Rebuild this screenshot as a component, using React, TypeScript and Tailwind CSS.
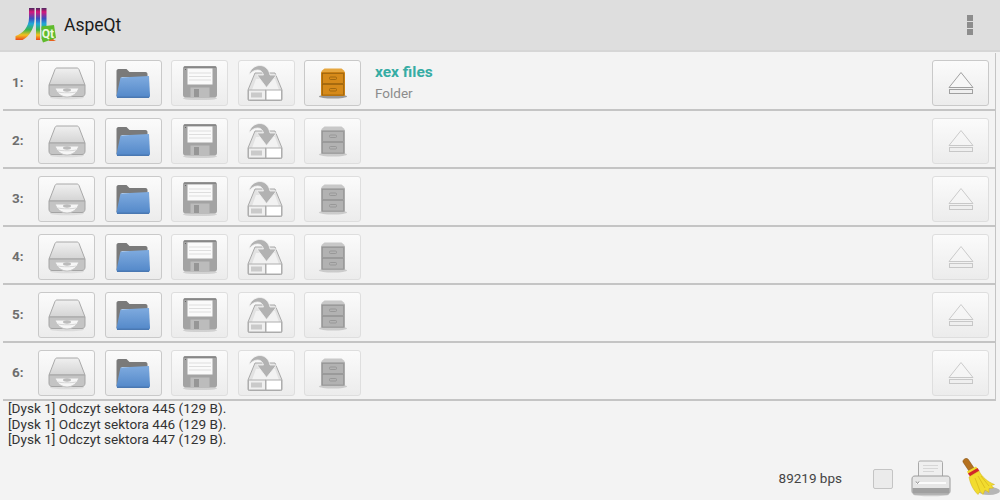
import React from "react";

const Logo = () => (
  <svg width="44" height="37" viewBox="0 0 44 37">
    <defs>
      <linearGradient id="rb" gradientUnits="userSpaceOnUse" x1="0" y1="1" x2="0" y2="34">
        <stop offset="0" stopColor="#4a2a60" />
        <stop offset="0.12" stopColor="#d8167a" />
        <stop offset="0.32" stopColor="#3a4fc0" />
        <stop offset="0.48" stopColor="#20a8d8" />
        <stop offset="0.66" stopColor="#3cb54a" />
        <stop offset="0.82" stopColor="#f4c020" />
        <stop offset="1" stopColor="#e8301c" />
      </linearGradient>
    </defs>
    <path d="M15 1h5.500v11c0 9-5.500 18-12 21H1.500v-4c7-2 13.500-9 13.500-18z" fill="url(#rb)" />
    <rect x="22" y="1" width="4" height="32" fill="url(#rb)" />
    <rect x="27.500" y="1" width="5" height="22" fill="url(#rb)" />
    <path d="M36 28l4 5 2 1h-7z" fill="#e8601c" />
    <path d="M27.500 19.500l12.500-1.500 2 13-13 4.500-1.500-4z" fill="#5fbb2c" />
    <text x="34" y="31" fontSize="12" fontWeight="700" fill="#eef9e0" textAnchor="middle" style={{ fontFamily: "Roboto, sans-serif" }}>Qt</text>
  </svg>
);

const Drive = () => (
  <svg width="40" height="36" viewBox="0 0 40 36" className="blur-[0.5px]">
    <defs>
      <linearGradient id="dt" x1="0" y1="0" x2="0" y2="1">
        <stop offset="0" stopColor="#f0f0f0" />
        <stop offset="1" stopColor="#d4d4d4" />
      </linearGradient>
    </defs>
    <ellipse cx="20" cy="32.500" rx="17" ry="1.800" fill="#000" opacity="0.08" />
    <path d="M8 4.500c.5-1 1-1.500 2-1.500h20c1 0 1.500.5 2 1.500l6 15.500H2z" fill="url(#dt)" stroke="#a8a8a8" />
    <path d="M2 20h36v8c0 2-1 3.500-3 3.500H5c-2 0-3-1.500-3-3.500z" fill="#c4c4c4" stroke="#a4a4a4" />
    <path d="M8 23h24c-2 5.500-6.500 9-12 9s-10-3.500-12-9z" fill="#f6f6f6" stroke="#c4c4c4" />
    <ellipse cx="20" cy="25" rx="4" ry="1.700" fill="#bbbbbb" />
    <path d="M11 27c4 1 14 1 18 0" stroke="#d6d6d6" fill="none" />
  </svg>
);

const Folder = () => (
  <svg width="36" height="32" viewBox="0 0 36 32" className="blur-[0.4px]">
    <defs>
      <linearGradient id="fb" x1="0" y1="0" x2="0" y2="1">
        <stop offset="0" stopColor="#7fabdf" />
        <stop offset="1" stopColor="#5388c9" />
      </linearGradient>
    </defs>
    <path d="M1.500 4c0-1 .6-2 2-2h8l3 3h16c1 0 2 .8 2 2v3h-26v19h-5z" fill="#7a7a7a" />
    <path d="M5.500 10.500l28.500-1.500 1 19.500c0 1.500-.5 2-1.500 2H3c-1 0-1.500-.5-1.500-1.500z" fill="url(#fb)" />
    <path d="M2 29.500h32v1.500H2z" fill="#4a78b2" />
  </svg>
);

const Floppy = () => (
  <svg width="36" height="36" viewBox="0 0 36 36" className="blur-[0.4px]">
    <ellipse cx="18" cy="33.500" rx="17" ry="1.600" fill="#000" opacity="0.12" />
    <path d="M1 3c0-1 1-2 2-2h30c1 0 2 1 2 2v27c0 1.500-1 2.500-2 2.500H3c-1 0-2-1-2-2.500z" fill="#a3a3a3" />
    <path d="M2 1.500h32v1.300H2z" fill="#808080" />
    <rect x="5.500" y="3.500" width="25" height="16" fill="#fafafa" />
    <path d="M7 8h22M7 11.500h22M7 15h22" stroke="#dedede" />
    <rect x="8.500" y="22.500" width="19" height="10" fill="#bcbcbc" />
    <rect x="12" y="24" width="5" height="8" fill="#969696" />
    <rect x="3" y="4" width="1" height="1" fill="#666" />
  </svg>
);

const Export = () => (
  <svg width="38" height="36" viewBox="0 0 38 36" className="blur-[0.4px]">
    <path d="M1 25l7-17h20l7 17v9c0 1-.5 1.500-1.500 1.500h-31C1.500 35.500 1 35 1 34z" fill="#e2e2e2" stroke="#a8a8a8" />
    <path d="M5 25l4-11h19l4 11z" fill="#f2f2f2" />
    <rect x="1.500" y="25" width="17" height="10" fill="#f0f0f0" stroke="#aeaeae" />
    <rect x="4" y="27.500" width="11" height="5" fill="#cacaca" />
    <rect x="19" y="25" width="15.500" height="10" fill="#ffffff" stroke="#aeaeae" />
    <path d="M2 10C3 4 8 .5 13 .5c5 0 9 4 10 9.500h6.500L19.500 22.500 10 10h6.500c-1-3.500-3-5-6-5S4 7 2 10z" fill="#b2b2b2" stroke="#f3f3f3" strokeWidth="0.800" />
  </svg>
);

const Cabinet = ({ on }: { on: boolean }) => {
  const body = on ? "#c97f13" : "#ababab";
  const top = on ? "#e6a63e" : "#c8c8c8";
  const face = on ? "#d68a1a" : "#b2b2b2";
  const line = on ? "#94600e" : "#929292";
  return (
    <svg width="30" height="34" viewBox="0 0 30 34" className="blur-[0.4px]">
      <ellipse cx="15" cy="30.500" rx="14" ry="2" fill="#000" opacity={on ? 0.35 : 0.15} />
      <path d="M3.500 5l3-2.500h17l3 2.500v2h-23z" fill={top} />
      <rect x="3" y="6" width="24" height="24" rx="1" fill={body} />
      <rect x="4.500" y="7.500" width="21" height="10" fill={face} stroke={line} strokeWidth="0.700" />
      <rect x="4.500" y="18.500" width="21" height="10.500" fill={face} stroke={line} strokeWidth="0.700" />
      <rect x="11.500" y="11" width="7" height="2.500" rx="1" fill="none" stroke={line} strokeWidth="0.800" />
      <rect x="11.500" y="22.500" width="7" height="2.500" rx="1" fill="none" stroke={line} strokeWidth="0.800" />
    </svg>
  );
};

const Eject = ({ on }: { on: boolean }) => (
  <svg width="26" height="24" viewBox="0 0 26 24" className={on ? "opacity-100 blur-[0.3px]" : "opacity-50 blur-[0.3px]"}>
    <path d="M13 1.500L25 16.500H1z" fill="#f7f7f7" stroke="#a0a0a0" />
    <rect x="1.500" y="18.500" width="23" height="4" fill="#efefef" stroke="#a0a0a0" />
  </svg>
);

const Printer = () => (
  <svg width="40" height="37" viewBox="0 0 40 37" className="blur-[0.4px]">
    <ellipse cx="20" cy="34.500" rx="18" ry="1.800" fill="#000" opacity="0.15" />
    <rect x="7.500" y="1" width="24" height="19" rx="1.500" fill="#efefef" stroke="#a9a9a9" />
    <path d="M12 5.500h15M12 8.500h15M12 11.500h11" stroke="#d6d6d6" />
    <path d="M1 19c0-2 1-3 3-3h32c2 0 3 1 3 3v12c0 2-1 3-3 3H4c-2 0-3-1-3-3z" fill="#e6e6e6" stroke="#9a9a9a" />
    <path d="M5 22h30v2H5z" fill="#fbfbfb" />
    <path d="M1.500 28h37v3c0 2-1 2.500-2.500 2.500H4c-1.500 0-2.500-.5-2.500-2.500z" fill="#a0a0a0" />
    <path d="M5 21.500l1.500 2 1.500-2" fill="none" stroke="#888" />
  </svg>
);

const Broom = () => (
  <svg width="38" height="40" viewBox="0 0 38 40" className="blur-[0.3px]">
    <ellipse cx="27" cy="34" rx="11" ry="4" fill="#000" opacity="0.25" />
    <path d="M1 5c-.5-2 2-4 4-3.500 1 .5 1.500 1 2 2l6 9-5 3z" fill="#b5711f" stroke="#85500f" strokeWidth="0.600" />
    <path d="M5 14.500l9-5 2 2.500-9.500 5.500z" fill="#f0d92a" />
    <path d="M6 16.500l9.500-5.500 2 3-9.500 5.500z" fill="#d3262a" />
    <path d="M7 20l10-6c3 6 9 11 15.500 13.500l-3 1 2 2.500-4.500.5 0 4-4-2.500-2 4.500-3-3-2 3C11 33 8 26 7 20z" fill="#f2dc2e" stroke="#cfae16" strokeWidth="0.500" />
    <path d="M13 21l5 13M16 19l7 12M19 19l8 10" stroke="#d6b31a" strokeWidth="0.700" />
  </svg>
);

const IconButton = ({ children, dim }: { children: React.ReactNode; dim?: boolean }) => (
  <div className={`w-[57px] h-[46px] shrink-0 flex items-center justify-center rounded-[3px] border bg-gradient-to-b from-[#fbfbfb] to-[#ececec] ${dim ? "border-[#dedede]" : "border-[#c9c9c9]"}`}>
    {children}
  </div>
);

const Row = ({ n, active }: { n: number; active?: boolean }) => (
  <div className="h-[58px] pt-[3px] ml-[3px] mr-[4px] flex items-center bg-[#f3f3f3] border-b-2 border-r border-[#c4c4c4] shrink-0">
    <div className="w-[35px] pl-[9px] text-[13.500px] font-bold text-[#6e6e6e]">{n}:</div>
    <div className="flex gap-[9.500px] items-center">
      <IconButton><Drive /></IconButton>
      <IconButton><Folder /></IconButton>
      <IconButton dim><Floppy /></IconButton>
      <IconButton dim><Export /></IconButton>
      <IconButton dim={!active}><Cabinet on={!!active} /></IconButton>
    </div>
    <div className="ml-[14px] flex-1 flex flex-col">
      {active && (
        <>
          <div className="text-[15.500px] font-bold leading-[21px] text-[#36aca4]">xex files</div>
          <div className="text-[13.500px] leading-[21px] text-[#8c8c8c]">Folder</div>
        </>
      )}
    </div>
    <div className="mr-[6px]">
      <IconButton dim={!active}><Eject on={!!active} /></IconButton>
    </div>
  </div>
);

export default function App() {
  return (
    <div className="w-[1000px] h-[500px] overflow-hidden bg-[#f3f3f3] flex flex-col font-['Roboto',sans-serif]">
      <div className="h-[52px] shrink-0 bg-[#dedede] border-b-2 border-[#d6d6d6] flex items-center">
        <div className="ml-[14px] mt-[1px]"><Logo /></div>
        <div className="ml-[6px] text-[17.500px] text-[#1c1c1c]">AspeQt</div>
        <div className="ml-auto mr-[27px] flex flex-col gap-[1px]">
          <div className="w-[6px] h-[6px] bg-[#8d8d8d]" />
          <div className="w-[6px] h-[6px] bg-[#8d8d8d]" />
          <div className="w-[6px] h-[6px] bg-[#8d8d8d]" />
        </div>
      </div>
      <div className="flex flex-col mt-[1px]">
        <Row n={1} active />
        <Row n={2} />
        <Row n={3} />
        <Row n={4} />
        <Row n={5} />
        <Row n={6} />
      </div>
      <div className="ml-[8px] text-[13.600px] leading-[15.500px] text-[#333]">
        <div>[Dysk 1] Odczyt sektora 445 (129 B).</div>
        <div>[Dysk 1] Odczyt sektora 446 (129 B).</div>
        <div>[Dysk 1] Odczyt sektora 447 (129 B).</div>
      </div>
      <div className="flex-1 flex items-end justify-end">
        <div className="flex items-center mb-[3px]">
          <div className="text-[13.500px] text-[#444]">89219 bps</div>
          <div className="ml-[31px] w-[20px] h-[20px] rounded-[2px] border border-[#c4c4c4] bg-[#ebebeb]" />
          <div className="ml-[18px]"><Printer /></div>
          <div className="ml-[11px] mt-[-3px]"><Broom /></div>
        </div>
      </div>
    </div>
  );
}
